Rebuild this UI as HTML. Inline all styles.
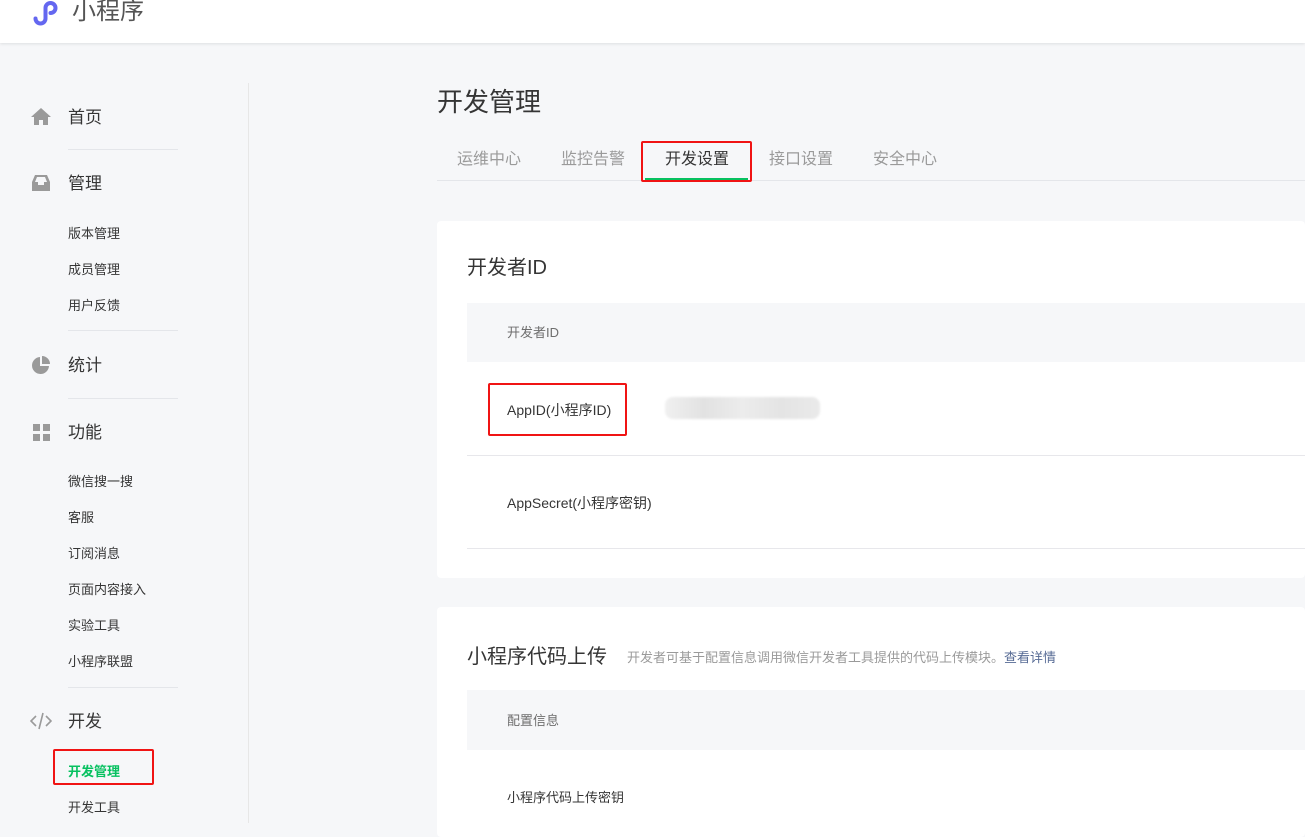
<!DOCTYPE html><html><head><meta charset="utf-8"><style>
*{margin:0;padding:0;box-sizing:border-box}
body{width:1305px;height:823px;overflow:hidden;background:#f6f7f9;font-family:"Liberation Sans","Noto Sans CJK SC",sans-serif;color:#353535;position:relative}
.a{position:absolute;white-space:nowrap}
.hd{left:0;top:0;width:1305px;height:43px;background:#fff;box-shadow:0 1px 3px rgba(0,0,0,.1)}
.m{font-size:17px;left:68px;line-height:20px;color:#353535}
.s{font-size:13px;left:68px;line-height:16px;color:#353535}
.dv{left:68px;width:110px;height:1px;background:#e4e6ea}
.tab{font-size:16px;top:150px;line-height:20px;color:#9a9a9a}
.card{background:#fff;left:437px;width:868px;border-radius:4px}
.gray{background:#f6f7f9;left:467px;width:838px}
.line{left:467px;width:838px;height:1px;background:#e7e7eb}
.red{border:2px solid #f01414;border-radius:2px}
.t14{font-size:14px;line-height:18px}
</style></head><body>
<div class="a hd"></div>
<svg class="a" style="left:31px;top:0" width="34" height="27" viewBox="0 0 34 27"><path d="M4.5 18.5a5 5 0 1 0 10 0V8a5 5 0 1 1 5 5" fill="none" stroke="#6467f0" stroke-width="4" stroke-linecap="round"/></svg>
<div class="a" style="left:72px;top:-3px;font-size:24px;line-height:30px;color:#555">小程序</div>
<div class="a" style="left:248px;top:83px;width:1px;height:740px;background:#e7e7e7"></div>

<svg class="a" style="left:31px;top:107px" width="20" height="20" viewBox="0 0 20 20"><path d="M10 1 0 10h3v8h5v-5h4v5h5v-8h3z" fill="#9a9a9a"/></svg>
<div class="a m" style="top:108px">首页</div>
<div class="a dv" style="top:149px"></div>
<svg class="a" style="left:32px;top:174px" width="18" height="18" viewBox="0 0 18 18"><path d="M3 1h12l3 7v9H0V8zM3 8h3v3h6V8h3L13 3H5z" fill="#9a9a9a" fill-rule="evenodd"/></svg>
<div class="a m" style="top:174px">管理</div>
<div class="a s" style="top:226px">版本管理</div>
<div class="a s" style="top:262px">成员管理</div>
<div class="a s" style="top:298px">用户反馈</div>
<div class="a dv" style="top:330px"></div>
<svg class="a" style="left:32px;top:356px" width="18" height="18" viewBox="0 0 18 18"><path d="M8 1v9h9A8.5 8.5 0 1 1 8 1zM10 0a8 8 0 0 1 8 8h-8z" fill="#9a9a9a"/></svg>
<div class="a m" style="top:356px">统计</div>
<div class="a dv" style="top:398px"></div>
<svg class="a" style="left:33px;top:424px" width="17" height="17" viewBox="0 0 17 17"><path d="M0 0h7v7H0zM10 0h7v7h-7zM0 10h7v7H0zM10 10h7v7h-7z" fill="#9a9a9a"/></svg>
<div class="a m" style="top:423px">功能</div>
<div class="a s" style="top:474px">微信搜一搜</div>
<div class="a s" style="top:510px">客服</div>
<div class="a s" style="top:546px">订阅消息</div>
<div class="a s" style="top:582px">页面内容接入</div>
<div class="a s" style="top:618px">实验工具</div>
<div class="a s" style="top:654px">小程序联盟</div>
<div class="a dv" style="top:687px"></div>
<svg class="a" style="left:30px;top:712px" width="22" height="18" viewBox="0 0 22 18"><path d="M6 4 1 9l5 5M16 4l5 5-5 5M13 1 9 17" fill="none" stroke="#9a9a9a" stroke-width="1.6"/></svg>
<div class="a m" style="top:712px">开发</div>
<div class="a s" style="top:764px;color:#07c160;font-weight:600">开发管理</div>
<div class="a red" style="left:53px;top:749px;width:101px;height:36px"></div>
<div class="a s" style="top:800px">开发工具</div>

<div class="a" style="left:437px;top:87px;font-size:26px;line-height:30px;color:#353535">开发管理</div>
<div class="a" style="left:437px;top:180px;width:868px;height:1px;background:#e4e6ea"></div>
<div class="a tab" style="left:457px">运维中心</div>
<div class="a tab" style="left:561px">监控告警</div>
<div class="a tab" style="left:665px;color:#353535">开发设置</div>
<div class="a tab" style="left:769px">接口设置</div>
<div class="a tab" style="left:873px">安全中心</div>
<div class="a" style="left:645px;top:178px;width:103px;height:2px;background:#07c160"></div>
<div class="a red" style="left:641px;top:141px;width:111px;height:41px"></div>

<div class="a card" style="top:221px;height:357px"></div>
<div class="a" style="left:467px;top:256px;font-size:20px;line-height:24px">开发者ID</div>
<div class="a gray" style="top:303px;height:59px"></div>
<div class="a" style="left:507px;top:325px;font-size:13px;line-height:16px;color:#6e6e6e">开发者ID</div>
<div class="a t14" style="left:507px;top:401px">AppID(小程序ID)</div>
<div class="a" style="left:665px;top:397px;width:155px;height:22px;background:linear-gradient(90deg,#f0f0f0,#e2e2e2,#ececec,#e4e4e4,#eaeaea);border-radius:8px;filter:blur(1px)"></div>
<div class="a red" style="left:488px;top:383px;width:139px;height:53px"></div>
<div class="a line" style="top:455px"></div>
<div class="a t14" style="left:507px;top:494px">AppSecret(小程序密钥)</div>
<div class="a line" style="top:548px"></div>

<div class="a card" style="top:607px;height:230px"></div>
<div class="a" style="left:467px;top:645px;font-size:20px;line-height:24px">小程序代码上传</div>
<div class="a" style="left:627px;top:650px;font-size:13px;line-height:16px;color:#9a9a9a">开发者可基于配置信息调用微信开发者工具提供的代码上传模块。<span style="color:#576b95">查看详情</span></div>
<div class="a gray" style="top:690px;height:60px"></div>
<div class="a" style="left:507px;top:713px;font-size:13px;line-height:16px;color:#6e6e6e">配置信息</div>
<div class="a" style="left:507px;top:790px;font-size:13px;line-height:16px">小程序代码上传密钥</div>
</body></html>
